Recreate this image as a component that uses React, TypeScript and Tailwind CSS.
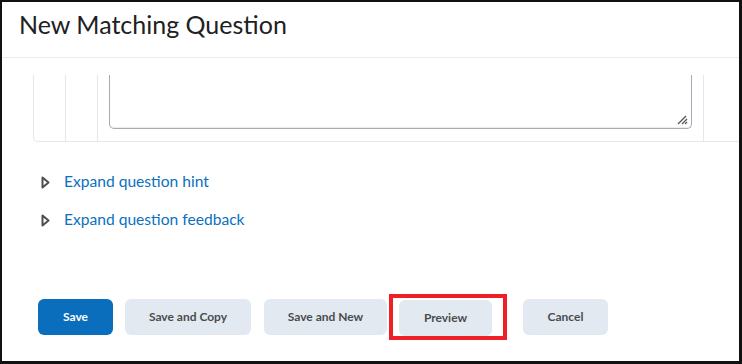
import * as React from "react"

const font = { fontFamily: "Lato, 'Noto Sans', sans-serif" }

function Caret() {
  return (
    <svg width="9" height="13" viewBox="0 0 9 13" className="shrink-0">
      <path d="M1.5 1.5 L7.5 6.5 L1.5 11.5 Z" fill="none" stroke="#4b4e52" strokeWidth="2" strokeLinejoin="round" />
    </svg>
  )
}

function ExpandLink({ label }: { label: string }) {
  return (
    <div className="flex items-center h-[20px]">
      <div className="w-[23px] flex items-center">
        <Caret />
      </div>
      <span className="text-[15.6px] text-[#0a70c0] leading-none">{label}</span>
    </div>
  )
}

function Button({ label, width, primary }: { label: string; width: string; primary?: boolean }) {
  return (
    <button
      className={`${width} h-[36px] rounded-[6px] text-[12px] font-bold ${
        primary ? "bg-[#0a6ebd] text-white" : "bg-[#e3e9f1] text-[#494c4e]"
      }`}
    >
      {label}
    </button>
  )
}

export default function App() {
  return (
    <div
      className="w-[742px] h-[364px] bg-white border-t-2 border-l-2 border-r-[3px] border-b-[3px] border-[#111] overflow-hidden flex flex-col"
      style={font}
    >
      {/* Header */}
      <div className="h-[56px] shrink-0 border-b border-[#e8ecf1] pl-[17px] pt-[7px]">
        <h1 className="text-[25px] leading-[30px] text-[#202122]">New Matching Question</h1>
      </div>

      {/* Scrolled table remnant */}
      <div className="mt-[17px] ml-[31px] flex h-[67px] border-l border-b border-[#e4e7eb] rounded-bl-[5px]">
        <div className="w-[32px] border-r border-[#e4e7eb]" />
        <div className="w-[32px] border-r border-[#e4e7eb]" />
        <div className="w-[605px] px-[11px]">
          <div className="relative h-[54px] border-l border-r border-b border-[#a8abb0] rounded-b-[5px] shadow-[inset_0_-1px_1px_rgba(0,0,0,0.08)]">
            <svg width="12" height="12" viewBox="0 0 12 12" className="absolute right-[3px] bottom-[3px]">
              <path d="M2 11 L10 3" stroke="#555" strokeWidth="1.2" />
              <path d="M6 11 L11 6" stroke="#555" strokeWidth="1.2" />
              <path d="M9 11 L11 9" stroke="#555" strokeWidth="1.2" />
            </svg>
          </div>
        </div>
        <div className="flex-1 border-l border-[#e4e7eb]" />
      </div>

      {/* Expanders */}
      <div className="mt-[30px] ml-[39px] flex flex-col gap-[18px]">
        <ExpandLink label="Expand question hint" />
        <ExpandLink label="Expand question feedback" />
      </div>

      {/* Buttons */}
      <div className="mt-[64px] ml-[36px] flex items-center">
        <Button label="Save" width="w-[75px]" primary />
        <div className="ml-[12px]">
          <Button label="Save and Copy" width="w-[126px]" />
        </div>
        <div className="ml-[13px]">
          <Button label="Save and New" width="w-[123px]" />
        </div>
        <div className="ml-[2px] w-[118px] h-[46px] border-4 border-[#ee1f26] pl-[6px] pt-[2px]">
          <Button label="Preview" width="w-[93px]" />
        </div>
        <div className="ml-[16px]">
          <Button label="Cancel" width="w-[85px]" />
        </div>
      </div>
    </div>
  )
}
